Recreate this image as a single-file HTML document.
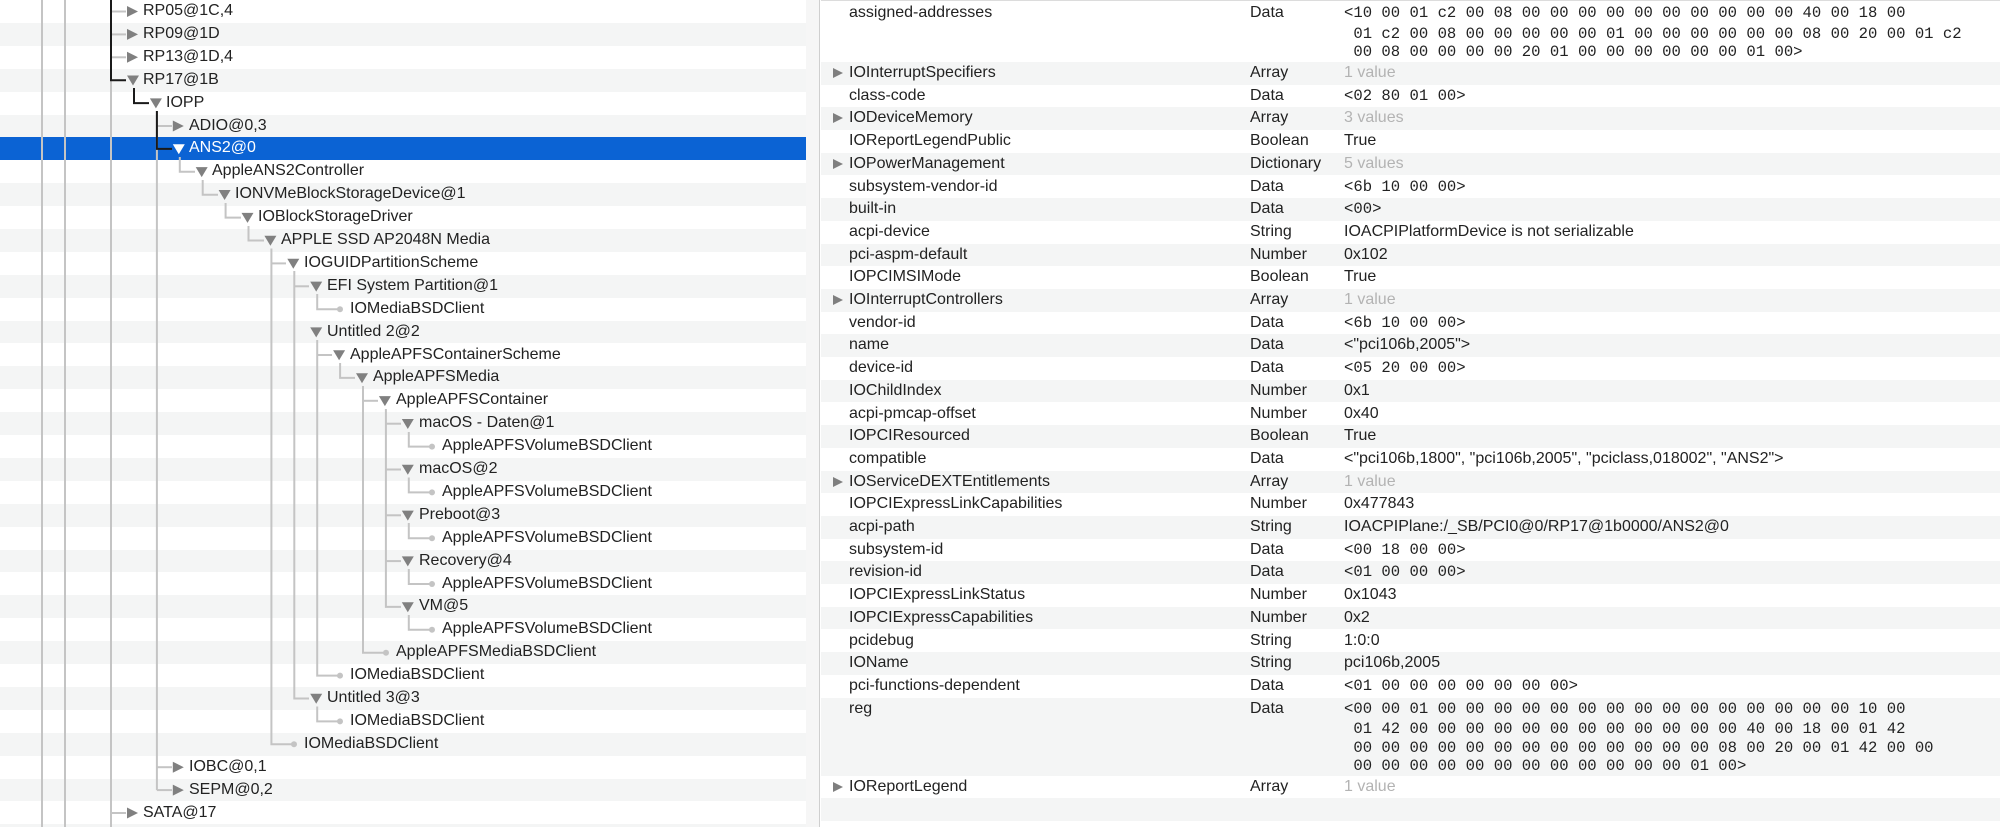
<!DOCTYPE html>
<html><head><meta charset="utf-8">
<style>
*{margin:0;padding:0;box-sizing:border-box}
body{width:2000px;height:827px;overflow:hidden;background:#fff;font-family:"Liberation Sans",Arial,sans-serif;font-size:16px;color:#222;position:relative}
#left{position:absolute;left:0;top:0;width:806px;height:827px;overflow:hidden;background:#fff}
.band{position:absolute;left:0;width:806px;height:22.9px}
.g{background:#f4f5f5}
.sel{background:#0b63d4}
.t{position:absolute;white-space:nowrap;line-height:22.9px;height:22.9px}
svg{position:absolute;left:0;top:0}
#gut{position:absolute;left:806px;top:0;width:14px;height:827px;background:#f6f6f6;border-right:1px solid #cfcfcf}
#right{position:absolute;left:821px;top:0;width:1179px;height:827px;background:#fff;border-top:1px solid #dcdcdc}
.r{position:absolute;left:0;width:1179px}
.k{position:absolute;left:28px;top:0;line-height:22.7px;white-space:nowrap}
.ty{position:absolute;left:429px;top:0;line-height:22.7px}
.v{position:absolute;left:523px;top:0;line-height:22.7px;white-space:nowrap}
.m{font-family:"Liberation Mono",monospace;font-size:15.6px}
.m div{line-height:18.4px}
.m div:first-child{line-height:22.7px}
.gv{color:#b3b3b3}
.tri{position:absolute;left:12px;top:6px;width:0;height:0;border-top:5.5px solid transparent;border-bottom:5.5px solid transparent;border-left:10px solid #7f7f7f}
</style></head><body>
<div id="left">
<div class="band g" style="top:22.9px"></div>
<div class="band g" style="top:68.7px"></div>
<div class="band g" style="top:114.5px"></div>
<div class="band sel" style="top:137.4px"></div>
<div class="band g" style="top:183.2px"></div>
<div class="band g" style="top:229px"></div>
<div class="band g" style="top:274.8px"></div>
<div class="band g" style="top:320.6px"></div>
<div class="band g" style="top:366.4px"></div>
<div class="band g" style="top:412.2px"></div>
<div class="band g" style="top:458px"></div>
<div class="band g" style="top:503.8px"></div>
<div class="band g" style="top:549.6px"></div>
<div class="band g" style="top:595.4px"></div>
<div class="band g" style="top:641.2px"></div>
<div class="band g" style="top:687px"></div>
<div class="band g" style="top:732.8px"></div>
<div class="band g" style="top:778.6px"></div>
<div class="band g" style="top:824.4px"></div>
<svg width="806" height="827" viewBox="0 0 806 827">
<g stroke="#c4c4c4" stroke-width="2" fill="none">
<line x1="42" y1="0" x2="42" y2="827"/>
<line x1="65" y1="0" x2="65" y2="827"/>
<line x1="111" y1="0" x2="111" y2="827"/>
<line x1="111" y1="11.5" x2="126" y2="11.5"/>
<line x1="111" y1="34.4" x2="126" y2="34.4"/>
<line x1="111" y1="57.3" x2="126" y2="57.3"/>
<line x1="111" y1="813" x2="126" y2="813"/>
<line x1="156.9" y1="111" x2="156.9" y2="790.1"/>
<line x1="156.9" y1="126" x2="172" y2="126"/>
<line x1="156.9" y1="767.2" x2="172" y2="767.2"/>
<line x1="156.9" y1="790.1" x2="172" y2="790.1"/>
<path d="M179.8 157V171.8H195"/>
<path d="M202.7 180V194.7H218"/>
<path d="M225.6 203V217.6H241"/>
<path d="M248.5 226V240.5H264"/>
<path d="M271.4 248.5V744.3H293"/>
<path d="M271.4 263.4H286"/>
<path d="M294.3 271V698.5H309"/>
<path d="M294.3 286.3H309"/>
<path d="M317.2 294V309.2H339"/>
<path d="M317.2 340V675.6H339"/>
<path d="M317.2 355H332"/>
<path d="M340.1 363V377.9H355"/>
<path d="M363 386V652.7H385"/>
<path d="M363 400.8H378"/>
<path d="M385.9 409V606.9H401"/>
<path d="M385.9 423.7H401"/>
<path d="M385.9 469.5H401"/>
<path d="M385.9 515.3H401"/>
<path d="M385.9 561.1H401"/>
<path d="M408.8 432V446.6H431"/>
<path d="M408.8 477.5V492.4H431"/>
<path d="M408.8 523V538.2H431"/>
<path d="M408.8 569V584H431"/>
<path d="M408.8 615V629.8H431"/>
<path d="M317.2 706.5V721.4H339"/>
</g>
<g fill="#c4c4c4">
<circle cx="340" cy="309.2" r="3"/>
<circle cx="432" cy="446.6" r="3"/>
<circle cx="432" cy="492.4" r="3"/>
<circle cx="432" cy="538.2" r="3"/>
<circle cx="432" cy="584" r="3"/>
<circle cx="432" cy="629.8" r="3"/>
<circle cx="386" cy="652.7" r="3"/>
<circle cx="340" cy="675.6" r="3"/>
<circle cx="340" cy="721.4" r="3"/>
<circle cx="294" cy="744.3" r="3"/>
</g>
<g stroke="#1a1a1a" stroke-width="2" fill="none">
<path d="M111 0V80.2H126"/>
<path d="M134 88V103.1H149"/>
<path d="M156.9 111V148.9H172"/>
</g>
<g fill="#808080">
<polygon points="127,6 138,11.5 127,17"/>
<polygon points="127,28.9 138,34.4 127,39.9"/>
<polygon points="127,51.8 138,57.3 127,62.8"/>
<polygon points="127,75.5 139,75.5 133,85.5"/>
<polygon points="149.9,98.4 161.9,98.4 155.9,108.4"/>
<polygon points="172.8,120.5 183.8,126 172.8,131.5"/>
<polygon points="195.7,167.1 207.7,167.1 201.7,177.1"/>
<polygon points="218.6,190 230.6,190 224.6,200"/>
<polygon points="241.5,212.9 253.5,212.9 247.5,222.9"/>
<polygon points="264.4,235.8 276.4,235.8 270.4,245.8"/>
<polygon points="287.3,258.7 299.3,258.7 293.3,268.7"/>
<polygon points="310.2,281.6 322.2,281.6 316.2,291.6"/>
<polygon points="310.2,327.4 322.2,327.4 316.2,337.4"/>
<polygon points="333.1,350.3 345.1,350.3 339.1,360.3"/>
<polygon points="356,373.2 368,373.2 362,383.2"/>
<polygon points="378.9,396.1 390.9,396.1 384.9,406.1"/>
<polygon points="401.8,419 413.8,419 407.8,429"/>
<polygon points="401.8,464.8 413.8,464.8 407.8,474.8"/>
<polygon points="401.8,510.6 413.8,510.6 407.8,520.6"/>
<polygon points="401.8,556.4 413.8,556.4 407.8,566.4"/>
<polygon points="401.8,602.2 413.8,602.2 407.8,612.2"/>
<polygon points="310.2,693.8 322.2,693.8 316.2,703.8"/>
<polygon points="172.8,761.7 183.8,767.2 172.8,772.7"/>
<polygon points="172.8,784.6 183.8,790.1 172.8,795.6"/>
<polygon points="127,807.5 138,813 127,818.5"/>
</g>
<polygon fill="#fff" points="172.8,144.2 184.8,144.2 178.8,154.2"/>
</svg>
<div class="t" style="left:143px;top:0">RP05@1C,4</div>
<div class="t" style="left:143px;top:22.9px">RP09@1D</div>
<div class="t" style="left:143px;top:45.8px">RP13@1D,4</div>
<div class="t" style="left:143px;top:68.7px">RP17@1B</div>
<div class="t" style="left:166px;top:91.6px">IOPP</div>
<div class="t" style="left:189px;top:114.5px">ADIO@0,3</div>
<div class="t" style="left:189px;top:137.4px;color:#fff">ANS2@0</div>
<div class="t" style="left:212px;top:160.3px">AppleANS2Controller</div>
<div class="t" style="left:235px;top:183.2px">IONVMeBlockStorageDevice@1</div>
<div class="t" style="left:258px;top:206.1px">IOBlockStorageDriver</div>
<div class="t" style="left:281px;top:229px">APPLE SSD AP2048N Media</div>
<div class="t" style="left:304px;top:251.9px">IOGUIDPartitionScheme</div>
<div class="t" style="left:327px;top:274.8px">EFI System Partition@1</div>
<div class="t" style="left:350px;top:297.7px">IOMediaBSDClient</div>
<div class="t" style="left:327px;top:320.6px">Untitled 2@2</div>
<div class="t" style="left:350px;top:343.5px">AppleAPFSContainerScheme</div>
<div class="t" style="left:373px;top:366.4px">AppleAPFSMedia</div>
<div class="t" style="left:396px;top:389.3px">AppleAPFSContainer</div>
<div class="t" style="left:419px;top:412.2px">macOS - Daten@1</div>
<div class="t" style="left:442px;top:435.1px">AppleAPFSVolumeBSDClient</div>
<div class="t" style="left:419px;top:458px">macOS@2</div>
<div class="t" style="left:442px;top:480.9px">AppleAPFSVolumeBSDClient</div>
<div class="t" style="left:419px;top:503.8px">Preboot@3</div>
<div class="t" style="left:442px;top:526.7px">AppleAPFSVolumeBSDClient</div>
<div class="t" style="left:419px;top:549.6px">Recovery@4</div>
<div class="t" style="left:442px;top:572.5px">AppleAPFSVolumeBSDClient</div>
<div class="t" style="left:419px;top:595.4px">VM@5</div>
<div class="t" style="left:442px;top:618.3px">AppleAPFSVolumeBSDClient</div>
<div class="t" style="left:396px;top:641.2px">AppleAPFSMediaBSDClient</div>
<div class="t" style="left:350px;top:664.1px">IOMediaBSDClient</div>
<div class="t" style="left:327px;top:687px">Untitled 3@3</div>
<div class="t" style="left:350px;top:709.9px">IOMediaBSDClient</div>
<div class="t" style="left:304px;top:732.8px">IOMediaBSDClient</div>
<div class="t" style="left:189px;top:755.7px">IOBC@0,1</div>
<div class="t" style="left:189px;top:778.6px">SEPM@0,2</div>
<div class="t" style="left:143px;top:801.5px">SATA@17</div>
</div>
<div id="gut"></div>
<div id="right">
<div class="r" style="top:1px;height:60px"><div class="k">assigned-addresses</div><div class="ty">Data</div><div class="v m"><div>&lt;10 00 01 c2 00 08 00 00 00 00 00 00 00 00 00 00 40 00 18 00</div><div>&nbsp;01 c2 00 08 00 00 00 00 00 01 00 00 00 00 00 00 08 00 20 00 01 c2</div><div>&nbsp;00 08 00 00 00 00 20 01 00 00 00 00 00 00 01 00&gt;</div></div></div>
<div class="r g" style="top:61px;height:22.7px"><span class="tri"></span><div class="k">IOInterruptSpecifiers</div><div class="ty">Array</div><div class="v gv">1 value</div></div>
<div class="r" style="top:83.7px;height:22.7px"><div class="k">class-code</div><div class="ty">Data</div><div class="v m">&lt;02 80 01 00&gt;</div></div>
<div class="r g" style="top:106.4px;height:22.7px"><span class="tri"></span><div class="k">IODeviceMemory</div><div class="ty">Array</div><div class="v gv">3 values</div></div>
<div class="r" style="top:129.1px;height:22.7px"><div class="k">IOReportLegendPublic</div><div class="ty">Boolean</div><div class="v">True</div></div>
<div class="r g" style="top:151.8px;height:22.7px"><span class="tri"></span><div class="k">IOPowerManagement</div><div class="ty">Dictionary</div><div class="v gv">5 values</div></div>
<div class="r" style="top:174.5px;height:22.7px"><div class="k">subsystem-vendor-id</div><div class="ty">Data</div><div class="v m">&lt;6b 10 00 00&gt;</div></div>
<div class="r g" style="top:197.2px;height:22.7px"><div class="k">built-in</div><div class="ty">Data</div><div class="v m">&lt;00&gt;</div></div>
<div class="r" style="top:219.9px;height:22.7px"><div class="k">acpi-device</div><div class="ty">String</div><div class="v">IOACPIPlatformDevice is not serializable</div></div>
<div class="r g" style="top:242.6px;height:22.7px"><div class="k">pci-aspm-default</div><div class="ty">Number</div><div class="v">0x102</div></div>
<div class="r" style="top:265.3px;height:22.7px"><div class="k">IOPCIMSIMode</div><div class="ty">Boolean</div><div class="v">True</div></div>
<div class="r g" style="top:288px;height:22.7px"><span class="tri"></span><div class="k">IOInterruptControllers</div><div class="ty">Array</div><div class="v gv">1 value</div></div>
<div class="r" style="top:310.7px;height:22.7px"><div class="k">vendor-id</div><div class="ty">Data</div><div class="v m">&lt;6b 10 00 00&gt;</div></div>
<div class="r g" style="top:333.4px;height:22.7px"><div class="k">name</div><div class="ty">Data</div><div class="v">&lt;"pci106b,2005"&gt;</div></div>
<div class="r" style="top:356.1px;height:22.7px"><div class="k">device-id</div><div class="ty">Data</div><div class="v m">&lt;05 20 00 00&gt;</div></div>
<div class="r g" style="top:378.8px;height:22.7px"><div class="k">IOChildIndex</div><div class="ty">Number</div><div class="v">0x1</div></div>
<div class="r" style="top:401.5px;height:22.7px"><div class="k">acpi-pmcap-offset</div><div class="ty">Number</div><div class="v">0x40</div></div>
<div class="r g" style="top:424.2px;height:22.7px"><div class="k">IOPCIResourced</div><div class="ty">Boolean</div><div class="v">True</div></div>
<div class="r" style="top:446.9px;height:22.7px"><div class="k">compatible</div><div class="ty">Data</div><div class="v">&lt;"pci106b,1800", "pci106b,2005", "pciclass,018002", "ANS2"&gt;</div></div>
<div class="r g" style="top:469.6px;height:22.7px"><span class="tri"></span><div class="k">IOServiceDEXTEntitlements</div><div class="ty">Array</div><div class="v gv">1 value</div></div>
<div class="r" style="top:492.3px;height:22.7px"><div class="k">IOPCIExpressLinkCapabilities</div><div class="ty">Number</div><div class="v">0x477843</div></div>
<div class="r g" style="top:515px;height:22.7px"><div class="k">acpi-path</div><div class="ty">String</div><div class="v">IOACPIPlane:/_SB/PCI0@0/RP17@1b0000/ANS2@0</div></div>
<div class="r" style="top:537.7px;height:22.7px"><div class="k">subsystem-id</div><div class="ty">Data</div><div class="v m">&lt;00 18 00 00&gt;</div></div>
<div class="r g" style="top:560.4px;height:22.7px"><div class="k">revision-id</div><div class="ty">Data</div><div class="v m">&lt;01 00 00 00&gt;</div></div>
<div class="r" style="top:583.1px;height:22.7px"><div class="k">IOPCIExpressLinkStatus</div><div class="ty">Number</div><div class="v">0x1043</div></div>
<div class="r g" style="top:605.8px;height:22.7px"><div class="k">IOPCIExpressCapabilities</div><div class="ty">Number</div><div class="v">0x2</div></div>
<div class="r" style="top:628.5px;height:22.7px"><div class="k">pcidebug</div><div class="ty">String</div><div class="v">1:0:0</div></div>
<div class="r g" style="top:651.2px;height:22.7px"><div class="k">IOName</div><div class="ty">String</div><div class="v">pci106b,2005</div></div>
<div class="r" style="top:673.9px;height:22.7px"><div class="k">pci-functions-dependent</div><div class="ty">Data</div><div class="v m">&lt;01 00 00 00 00 00 00 00&gt;</div></div>
<div class="r g" style="top:696.6px;height:78px"><div class="k">reg</div><div class="ty">Data</div><div class="v m"><div>&lt;00 00 01 00 00 00 00 00 00 00 00 00 00 00 00 00 00 00 10 00</div><div>&nbsp;01 42 00 00 00 00 00 00 00 00 00 00 00 00 40 00 18 00 01 42</div><div>&nbsp;00 00 00 00 00 00 00 00 00 00 00 00 00 08 00 20 00 01 42 00 00</div><div>&nbsp;00 00 00 00 00 00 00 00 00 00 00 00 01 00&gt;</div></div></div>
<div class="r" style="top:774.6px;height:22.7px"><span class="tri"></span><div class="k">IOReportLegend</div><div class="ty">Array</div><div class="v gv">1 value</div></div>
<div class="r g" style="top:797.3px;height:22.7px"></div>
</div>
</body></html>
